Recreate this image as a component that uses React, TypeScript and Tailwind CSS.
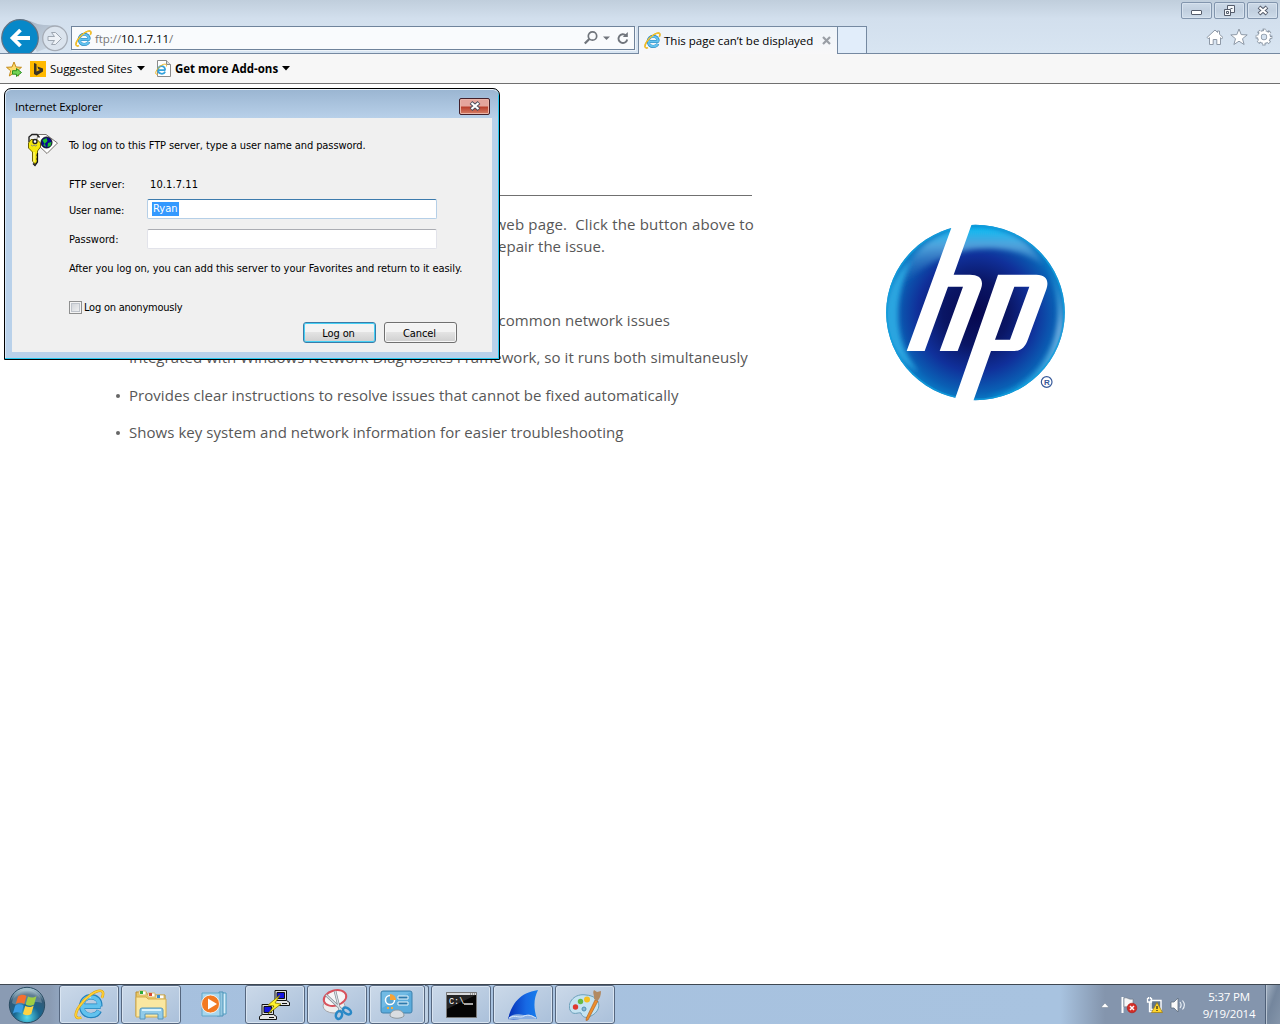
import React from 'react';

function IeIcon({ size }: { size: number }) {
  return (
    <svg width={size} height={size} viewBox="0 0 32 32" fill="none" className="shrink-0">
      <path d="M27.5 17.8H10.2M26.6 17.8C27 11.5 23 8 17.5 8S8 12 8 17.6c0 5.900 4 9.900 9.600 9.900 4 0 7-1.900 8.500-5" stroke="#2383bd" strokeWidth="5.600" />
      <path d="M27 17.8H10.2M26.200 17.8C26.500 11.500 22.600 8.400 17.500 8.400S8.300 12.300 8.300 17.600c0 5.600 3.900 9.400 9.300 9.400 4 0 6.600-1.700 8-4.500" stroke="#62c2ee" strokeWidth="4" />
      <path d="M8.500 13.500c2-3.500 5-5.300 9-5.300" stroke="#b5e8fb" strokeWidth="1.500" />
      <path d="M7.500 29.300C4.700 30.500 2.500 30 2 28 .8 22.500 9 11.500 17.500 5.700 22.500 2.300 28 .5 29.600 3c.8 1.500.4 3.800-.8 6.200" stroke="#dd9d00" strokeWidth="2.700" />
      <path d="M7.500 29.300C4.700 30.500 2.500 30 2 28 .8 22.500 9 11.500 17.500 5.700 22.500 2.300 28 .5 29.600 3c.8 1.500.4 3.800-.8 6.200" stroke="#fdd13a" strokeWidth="1.700" />
    </svg>
  );
}

function NavButtons() {
  return (
    <svg width="71" height="53" viewBox="0 0 71 53" className="shrink-0">
      <defs>
        <linearGradient id="navShade" x1="0" y1="0" x2="1" y2="1">
          <stop offset="0" stopColor="#8796a8" />
          <stop offset="1" stopColor="#d3deea" />
        </linearGradient>
      </defs>
      <path d="M21 19.500c10 0 13 5 23 5.500 8 .3 14 0 19 4L52 46l-15 6z" fill="url(#navShade)" opacity=".65" />
      <circle cx="55" cy="38.300" r="12.300" fill="#dbe4ee" stroke="#a5acb6" strokeWidth="1.300" />
      <path d="M48 36.500h6.500l-3-4h4l6 6-6 6h-4l3-4H48z" fill="#eef2f7" stroke="#9da6b1" />
      <circle cx="20" cy="38" r="18.300" fill="#0788c8" stroke="#647282" strokeWidth="1.200" />
      <path d="M30 38H13M20.500 30l-8 8 8 8" fill="none" stroke="#fff" strokeWidth="3.800" />
    </svg>
  );
}

function WindowButtons() {
  return (
    <div className="flex gap-[2px] pt-[2px] pr-[2px]">
      {[0, 1, 2].map((i) => (
        <div key={i} className="flex h-[17px] w-[31px] items-center justify-center rounded-[2px] border border-[#8295ad] bg-gradient-to-b from-[#ccd9e7] via-[#c1cfdf] to-[#cddbe9] shadow-[inset_0_0_0_1px_#d7e2ee]">
          {i === 0 && <div className="mt-[4px] h-[5px] w-[11px] rounded-[1px] border border-[#555c6b] bg-white" />}
          {i === 1 && (
            <svg width="13" height="12" fill="#f4f7fa" stroke="#555c6b">
              <path d="M4.500.5h7v7h-7zM7.500 3.500h2" />
              <path d="M1.500 4.500h6v6h-6zM3.500 6.500h2v2h-2z" />
            </svg>
          )}
          {i === 2 && (
            <svg width="12" height="11">
              <path d="M2 2l8 7M10 2L2 9" stroke="#555c6b" strokeWidth="4" />
              <path d="M2.500 2.500l7 6M9.500 2.500l-7 6" stroke="#fff" strokeWidth="2" />
            </svg>
          )}
        </div>
      ))}
    </div>
  );
}

function GearIcon() {
  return (
    <svg width="18" height="18" viewBox="0 0 18 18" fill="none">
      <circle cx="9" cy="9" r="6.700" stroke="#8d99a7" strokeWidth="3.400" strokeDasharray="3.100 2.162" strokeDashoffset="1.500" />
      <circle cx="9" cy="9" r="4.700" stroke="#8d99a7" strokeWidth="4.600" />
      <circle cx="9" cy="9" r="6.300" stroke="#fff" strokeWidth="2.600" strokeDasharray="1.800 3.148" strokeDashoffset=".85" />
      <circle cx="9" cy="9" r="4.600" stroke="#fff" strokeWidth="2.900" />
    </svg>
  );
}

function Header() {
  return (
    <header className="flex h-[54px] items-start border-b border-[#7589a1] bg-gradient-to-b from-[#c0cedc] via-[#d2dfed] via-35% to-[#d8e5f2] text-[11.5px]">
      <NavButtons />
      <div className="mt-[26px] flex h-[24px] w-[564px] shrink-0 items-center border border-[#6f839b] bg-[#f9fbfd] pr-[3px] pl-[3px] shadow-[1px_1px_0_#eef4fa]">
        <IeIcon size={17} />
        <span className="mt-px ml-[3px] grow tracking-[-0.06px] text-[#777]">ftp://<span className="text-black">10.1.7.11</span>/</span>
        <svg width="48" height="18" fill="none" stroke="#70757c">
          <circle cx="9.500" cy="7" r="4.200" strokeWidth="1.700" />
          <path d="M6.300 10L1.800 14.500" strokeWidth="2.300" />
          <path d="M20 7.500h7L23.500 11z" fill="#70757c" stroke="none" />
          <path d="M43 6.500A4.400 4.400 0 1 0 44.200 10.500" strokeWidth="1.900" />
          <path d="M44.800 3v5h-5z" fill="#70757c" stroke="none" />
        </svg>
      </div>
      <div className="mt-[26px] ml-[3px] flex h-[28px] w-[200px] shrink-0 items-center border-x border-t border-[#7589a1] bg-gradient-to-b from-[#edf3f9] to-[#f8f8f9] pl-[5px]">
        <IeIcon size={17} />
        <span className="ml-[3px] w-[149px] whitespace-nowrap text-black">This page can’t be displayed</span>
        <svg width="9" height="9" className="ml-[9px]"><path d="M1 1l7 7M8 1L1 8" stroke="#999ea5" strokeWidth="2.200" /></svg>
      </div>
      <div className="mt-[26px] h-[27px] w-[29px] shrink-0 border-t border-r border-[#7589a1] bg-[#e1edfa]" />
      <div className="flex grow flex-col items-end">
        <WindowButtons />
        <div className="mt-[9px] mr-[7px] flex items-center gap-[7px]">
          <svg width="18" height="18" fill="#fff" stroke="#8e99a7" className="-mr-px"><path d="M1 9.500L9 2l2.500 2.400V3h2v3.300L17 9.500l-1.200 1.200-1.300-1v6.800h-3.700v-5H7.200v5H3.500V9.700l-1.300 1z" /></svg>
          <svg width="18" height="18" fill="#fff" stroke="#8e99a7"><path d="M9 1l2.200 5.600 6 .3-4.700 3.800 1.600 5.800L9 13.200l-5.100 3.300 1.600-5.800L.8 6.900l6-.3z" /></svg>
          <GearIcon />
        </div>
      </div>
    </header>
  );
}

function FavoritesBar() {
  return (
    <nav className="flex h-[30px] items-center border-b border-[#707070] bg-[#f7f7f7] pl-[6px] text-[11.5px] text-black">
      <svg width="17" height="17" className="mt-px shrink-0">
        <path d="M8 1l2 5 5.500.3-4.200 3.500 1.400 5.200L8 12l-4.700 3 1.400-5.200L.5 6.300 6 6z" fill="#fedc6a" stroke="#c48b1d" />
        <path d="M6.500 9.700h4V7.500l5 4-5 4v-2.300h-4z" fill="#73d455" stroke="#2b8f23" />
      </svg>
      <svg width="16" height="16" className="ml-[7px] shrink-0"><path d="M0 0h16v16H0z" fill="#ffb900" /><path d="M4 2l2.500 1v7.500L10 9 8.300 8 7.400 5.500 13 7.600v3L6.500 14.500 4 13z" fill="#3b3526" /></svg>
      <span className="ml-[4px] w-[83px] whitespace-nowrap tracking-[-0.1px]">Suggested Sites</span>
      <svg width="8" height="5" className="ml-[4px]"><path d="M0 0h8L4 4.500z" /></svg>
      <div className="ml-[10px] h-[17px] w-[17px] shrink-0">
        <svg width="17" height="17"><path d="M2.500.5h9l4 4v12h-13z" fill="#fff" stroke="#8b8b8b" /><path d="M11.500.5v4h4" fill="#ddd" stroke="#8b8b8b" /><g transform="translate(0 3) scale(.39)" fill="none"><path d="M27 18H10M26 18c0-14-18-13-18 0 0 12 15 12 18 4" stroke="#35a2dc" strokeWidth="4.500" /><path d="M7 29c-15 2 5-26 18-26 5 0 5 3 4 6" stroke="#f1b51c" strokeWidth="2.500" /></g></svg>
      </div>
      <span className="ml-[3px] w-[105px] whitespace-nowrap font-bold">Get more Add-ons</span>
      <svg width="8" height="5" className="ml-[2px]"><path d="M0 0h8L4 4.500z" /></svg>
    </nav>
  );
}

function KeyIcon() {
  return (
    <svg width="32" height="34" viewBox="0 0 32 34">
      <path d="M11 1.500h8L30.500 10 20 20.500 9 10z" fill="#fff" stroke="#77736e" />
      <circle cx="19.500" cy="9.500" r="5.500" fill="#080890" stroke="#111" />
      <path d="M15.500 7l4-2 1 3-3 3zM21 10l3.500-1-1 4-3 1zM16 12l2-1 1 3z" fill="#20c128" />
      <path d="M2 9V4l3-2.500h5l2.500 3" fill="none" stroke="#222" strokeWidth="1.400" />
      <path d="M4 6.500h6L13.500 10v4l-3 4v3l-1 1 1 2-1 2 1 2-2.500 3-2.500-3V19L1.500 15v-5z" fill="#f5e90b" stroke="#6b6200" />
      <path d="M10.500 20v9l-2.500 3.500-2-2" fill="none" stroke="#111" strokeWidth="1.200" />
      <circle cx="8" cy="8.500" r="2" fill="#fff" stroke="#222" strokeWidth="1.400" />
      <path d="M7 19v10" stroke="#fffbb0" />
      <path d="M4 12l1.500 1L7 12l1.500 1 1.500-1" fill="none" stroke="#888" />
    </svg>
  );
}

function DialogButton({ label, primary }: { label: string; primary?: boolean }) {
  return (
    <button className={'h-[21px] w-[73px] rounded-[3px] border bg-gradient-to-b from-[#f3f3f3] from-45% via-[#e3e3e3] via-50% to-[#cfcfcf] ' + (primary ? 'border-[#3a7ca8] shadow-[inset_0_0_0_1px_#45d0f5]' : 'border-[#707070] shadow-[inset_0_0_0_1px_#f7f7f7]')}>
      <span className="block pt-px pr-[2px] leading-[17px] tracking-[-0.1px]">{label}</span>
    </button>
  );
}

function LogonDialog() {
  return (
    <section className="absolute top-[88px] left-[4px] flex h-[272px] w-[496px] flex-col rounded-t-[7px] border border-black bg-[#b9d1ea] bg-gradient-to-b from-[#9ab5d1] to-[#b9d1ea] to-[30px] px-[7px] pb-[7px] shadow-[inset_0_1px_0_#eaf3fb,inset_-1px_-1px_0_#25c8ef,inset_1px_0_0_#d7e8f8] font-['DejaVu_Sans_Condensed','DejaVu_Sans',sans-serif] text-[11px] leading-[14px] text-black">
      <div className="flex h-[29px] shrink-0 items-center justify-between pt-[5px] pr-[2px] pl-[3px]">
        <h1 className="pt-px font-['Open_Sans',sans-serif] text-[11.5px] tracking-[-0.22px]">Internet Explorer</h1>
        <div className="flex h-[17px] w-[31px] items-center justify-center rounded-[2px] border border-[#43202a] bg-gradient-to-b from-[#e5a59c] from-48% via-[#b83a28] via-52% to-[#d58069] shadow-[inset_0_0_0_1px_#eab5a9]">
          <svg width="12" height="10"><path d="M2 1.500l8 7M10 1.500l-8 7" stroke="#4b4c5a" strokeWidth="4" /><path d="M2.500 2l7 6M9.500 2l-7 6" stroke="#fff" strokeWidth="2.200" /></svg>
        </div>
      </div>
      <div className="flex grow bg-[#f0f0f0] pt-[15px] pl-[15px]">
        <div className="w-[42px] shrink-0"><KeyIcon /></div>
        <div className="w-[394px] shrink-0 pt-[6px]">
          <p className="whitespace-nowrap tracking-[-0.09px]">To log on to this FTP server, type a user name and password.</p>
          <div className="mt-[25px] grid grid-cols-[78px_290px] items-center">
            <span className="tracking-[0.07px]">FTP server:</span><span className="pl-[3px] tracking-[0.1px]">10.1.7.11</span>
            <span className="mt-[9px] tracking-[-0.2px]">User name:</span>
            <div className="mt-[7px] mb-px flex h-[20px] items-center rounded-[2px] border border-[#b5cfe7] border-t-[#3d7bad] bg-white pl-[4px]"><span className="h-[14px] w-[27px] bg-[#3399ff] pl-px text-white">Ryan</span></div>
            <span className="mt-[10px]">Password:</span>
            <div className="mt-[9px] mb-px h-[20px] rounded-[2px] border border-[#e2e3ea] border-t-[#abadb3] bg-white" />
          </div>
          <p className="mt-[12px] whitespace-nowrap tracking-[-0.07px]">After you log on, you can add this server to your Favorites and return to it easily.</p>
          <label className="mt-[24px] flex items-center">
            <span className="-mt-px h-[13px] w-[13px] border border-[#8e8f8f] bg-gradient-to-br from-[#cbcfd5] to-[#f6f6f6] shadow-[inset_0_0_0_1px_#f4f4f4,inset_0_0_0_2px_#bfc4cb]" />
            <span className="ml-[2px] pt-px tracking-[-0.23px]">Log on anonymously</span>
          </label>
          <div className="mt-[7px] flex gap-[8px] pl-[234px]"><DialogButton label="Log on" primary /><DialogButton label="Cancel" /></div>
        </div>
      </div>
    </section>
  );
}

function HpLogo() {
  return (
    <svg width="210" height="205" viewBox="0 0 630 615">
      <defs>
        <radialGradient id="hpFill" cx="0.5" cy="0.5" r="0.52">
          <stop offset="0" stopColor="#06074f" /><stop offset=".35" stopColor="#0a1665" /><stop offset=".62" stopColor="#10309a" /><stop offset=".84" stopColor="#0a5fb4" /><stop offset="1" stopColor="#0a8ed2" />
        </radialGradient>
        <linearGradient id="hpTop" x1="0" y1="0" x2="0" y2="1"><stop offset="0" stopColor="#00bdf5" /><stop offset=".3" stopColor="#64b4e6" stopOpacity=".8" /><stop offset="1" stopColor="#164ba9" stopOpacity="0" /></linearGradient>
        <linearGradient id="hpRight" x1="0" y1="0" x2="0" y2="1"><stop offset="0" stopColor="#15a3e3" /><stop offset=".5" stopColor="#a1c7ec" /><stop offset="1" stopColor="#079cdb" /></linearGradient>
        <filter id="hpSoft"><feGaussianBlur stdDeviation="8" /></filter>
        <clipPath id="hpClip"><ellipse cx="316.500" cy="307.500" rx="268" ry="263" /></clipPath>
      </defs>
      <g clipPath="url(#hpClip)">
        <path d="M45 40h545v540H45z" fill="url(#hpFill)" />
        <path d="M85 240C125 20 430-15 520 165c-80-65-290-90-435 75z" fill="url(#hpTop)" filter="url(#hpSoft)" />
        <path d="M520 145c45 70 60 170 28 255-35 90-98 143-195 160 190 30 300-215 167-415z" fill="url(#hpRight)" opacity=".75" filter="url(#hpSoft)" />
        <path d="M125 150C70 265 65 390 145 485 10 420 20 230 125 150z" fill="#2ba5e0" filter="url(#hpSoft)" />
        <ellipse cx="316.500" cy="307.500" rx="266" ry="261" fill="none" stroke="#119fdc" strokeWidth="6" opacity=".75" />
      </g>
      <path d="M249 40L110 423h54l70-193h45l-70 193h54l70-187c10-29-6-42-33-42h-49L306 40z" fill="#fff" />
      <path fillRule="evenodd" d="M384 194h115c32 0 39 20 29 47l-54 147c-8 23-20 35-41 35h-70l-55 155h-57zM433 230l-58 159h45l58-159z" fill="#fff" />
      <circle cx="530" cy="516" r="16" fill="none" stroke="#37599a" strokeWidth="3.500" />
      <text x="522" y="525" fontFamily="Liberation Sans, sans-serif" fontSize="24" fontWeight="700" fill="#37599a">R</text>
    </svg>
  );
}

function PageBody() {
  return (
    <main className="flex h-[900px] bg-white text-[15px] leading-[22px] text-[#575757]">
      <article className="w-[755px] shrink-0 pt-[111px] pl-[116px]">
        <div className="mr-[3px] h-px bg-[#707070]" />
        <p className="mt-[17px] mr-px text-right whitespace-pre tracking-[0.16px]">web page.  Click the button above to</p>
        <p className="w-[489px] text-right tracking-[0.05px]">repair the issue.</p>
        <ul className="mt-[52px] grid grid-rows-4 gap-y-[15.400px] tracking-[0.05px]">
          <li className="w-[554px] text-right">common network issues</li>
          {['Integrated with Windows Network Diagnostics Framework, so it runs both simultaneusly', 'Provides clear instructions to resolve issues that cannot be fixed automatically', 'Shows key system and network information for easier troubleshooting'].map((t) => (
            <li key={t} className="flex items-center whitespace-nowrap"><span className="mt-[2px] mr-[9px] h-[4px] w-[4px] rounded-full bg-[#666]" /><span>{t}</span></li>
          ))}
        </ul>
      </article>
      <div className="mt-[126px] ml-[115px]"><HpLogo /></div>
    </main>
  );
}

function TaskButton({ children, plain, className = '' }: { children: React.ReactNode; plain?: boolean; className?: string }) {
  return (
    <div className={'flex h-[39px] w-[60px] shrink-0 items-center justify-center rounded-[3px] border ' + (plain ? 'border-transparent ' : 'border-[#56677f] bg-gradient-to-br from-[#cbd9e9] to-[#aac0da] shadow-[inset_0_0_0_1px_#d8e4f1] ') + className}>
      {children}
    </div>
  );
}

function StartOrb() {
  return (
    <svg width="38" height="38" viewBox="0 0 38 38">
      <defs><radialGradient id="orb" cx=".5" cy=".85" r=".8"><stop offset="0" stopColor="#56dcef" /><stop offset=".45" stopColor="#19668f" /><stop offset=".8" stopColor="#345975" /><stop offset="1" stopColor="#a1bfcd" /></radialGradient></defs>
      <circle cx="19" cy="19" r="17.700" fill="url(#orb)" stroke="#294b62" />
      <path d="M4 17C6-1 32-1 34 17 23 13 14 23 4 17z" fill="#fff" opacity=".22" />
      <path d="M10 10.500c3-2.500 6-2 8.500-.5l-2.300 8c-2.500-1.500-5.500-2-8.500 0z" fill="#f36f30" />
      <path d="M20 10.500c3 1.500 5.500 1.500 8.500-.5l-2.400 8.500c-3 2-5.700 1.500-8.400 0z" fill="#9fce45" />
      <path d="M7.200 19.500c3-2 6-1.500 8.500 0l-2.300 8c-2.500-1.500-5.500-2-8.500 0z" fill="#3b9de4" />
      <path d="M17.200 20c3 1.500 5.500 1.500 8.500-.5l-2.400 8.500c-3 2-5.700 1.500-8.400 0z" fill="#fed344" />
    </svg>
  );
}

function ExplorerIcon() {
  return (
    <svg width="34" height="32" viewBox="0 0 34 32">
      <path d="M2 3h10l2 3h17v21H2z" fill="#e9c765" stroke="#b98e30" />
      <path d="M5 2h7v4H5zM14 4h7v4h-7zM22 6h8v4h-8z" fill="#fff" stroke="#d7bd75" /><path d="M6 2h3v3H6z" fill="#2cab38" /><path d="M15 4h3v3h-3z" fill="#d94830" /><path d="M23 6h3v3h-3z" fill="#368cce" />
      <path d="M2 8h10l2 2h18v18H2z" fill="#fae7a1" stroke="#d3ac4e" />
      <path d="M6 30V21q0-2 2-2h19q2 0 2 2v9h-5v-5H11v5z" fill="#91cbe9" stroke="#5797bd" /><path d="M8 20h19v2H8z" fill="#d9f2fc" />
    </svg>
  );
}

function MediaIcon() {
  return (
    <svg width="30" height="28" viewBox="0 0 30 28" className="ml-[3px]"><path d="M21 2h5v21h-9z" fill="#d7effa" stroke="#4f9dc2" /><path d="M19 1h4v24h-6z" fill="#96c8e1" stroke="#4c92b7" /><path d="M2 2h18v23H2z" fill="#a7d6ed" stroke="#63a6c7" /><circle cx="10.500" cy="13" r="9" fill="#f27922" stroke="#fff" strokeWidth=".8" /><path d="M8 7.500l9 5.500-9 5.500z" fill="#fff" /></svg>
  );
}

function PuttyIcon() {
  const pc = (x: number, y: number) => (
    <g transform={`translate(${x} ${y})`} stroke="#111"><path d="M3 .5h11.500v10H3z" fill="#ddd" /><path d="M5 2.500h7.500v6H5z" fill="#1414df" /><path d="M.5 12.500l3-2h11l3 2v3H.500z" fill="#e4e4e4" /><path d="M10 13.500h5" /></g>
  );
  return <svg width="32" height="32" viewBox="0 0 32 32">{pc(13, 1)}{pc(0, 15)}<path d="M21 6l-12 10 6 1-6 8 13-10-6-1z" fill="#fff22d" stroke="#817a00" strokeWidth=".8" /></svg>;
}

function SnipIcon() {
  return (
    <svg width="32" height="33" viewBox="0 0 32 33" fill="none"><ellipse cx="13" cy="18" rx="11" ry="7" fill="#eee" stroke="#a5a5aa" /><ellipse cx="14" cy="10" rx="11.500" ry="7.500" transform="rotate(-16 14 10)" fill="#f6f6f7" stroke="#d8525c" strokeWidth="2" /><path d="M5 7l16 15M14 3l5 20" stroke="#7e8991" strokeWidth="2.600" /><path d="M5 7l16 15M14 3l5 20" stroke="#dbe2e6" strokeWidth="1.200" /><ellipse cx="18" cy="27" rx="3" ry="4" transform="rotate(20 18 27)" stroke="#2988c6" strokeWidth="2.500" /><ellipse cx="26" cy="23" rx="4.500" ry="2.700" transform="rotate(35 26 23)" stroke="#2988c6" strokeWidth="2.500" /></svg>
  );
}

function ControlIcon() {
  return (
    <svg width="34" height="29" viewBox="0 0 34 29"><rect x="1" y="1" width="31" height="22" rx="2" fill="#5bacdc" stroke="#3f81ad" /><path d="M2 2h29L2 18z" fill="#9bd5f4" opacity=".35" /><circle cx="10" cy="10" r="4.500" fill="#5ca6d2" stroke="#fff" strokeWidth="1.500" /><path d="M10 10V4a6 6 0 0 1 6 6z" fill="#f6a336" /><path d="M18 6h10v3H18zM18 12h10v3H18z" fill="#2b79ad" stroke="#e9f6fc" /><path d="M7 18h2M11 18h2" stroke="#faaa34" strokeWidth="2" /><path d="M10 26c0-8 14-8 14 0-3 3-11 3-14 0z" fill="#d9dde1" stroke="#8f999f" /></svg>
  );
}

function ConsoleIcon() {
  return (
    <svg width="31" height="26" viewBox="0 0 31 26"><path d="M.5.5h30v25H.5z" fill="#050505" stroke="#777" /><path d="M1 1h29v2H1z" fill="#d8dadd" /><path d="M24 2h1M26 2h1M28 2h1" stroke="#555" /><path d="M1 3h29L1 17z" fill="#fff" opacity=".13" /><text x="3" y="12" fontFamily="Liberation Mono, monospace" fontSize="8.500" fill="#fff">C:\</text><path d="M18 12h9" stroke="#fff" strokeWidth="1.300" /></svg>
  );
}

function SharkIcon() {
  return (
    <svg width="32" height="32" viewBox="0 0 32 32"><defs><linearGradient id="fin"><stop stopColor="#052fb6" /><stop offset=".6" stopColor="#1769e4" /><stop offset="1" stopColor="#167eec" /></linearGradient></defs><path d="M1 30C5 15 12 4 31 1c-4 8-5 17-1 29-10-3-18 2-29 0z" fill="url(#fin)" /><path d="M1 30c5-7 12-4 16-4s8-2 13 4z" fill="#8bafe2" /><path d="M2 29c6-4 11 1 15-2 5-2 8 0 12 2" fill="none" stroke="#dae8fa" /></svg>
  );
}

function PaintIcon() {
  return (
    <svg width="32" height="32" viewBox="0 0 32 32"><path d="M17 6C6 4-2 13 1 21c3 6 8 2 11 3 1 4 5 6 10 3 12-6 10-20-5-21z" fill="#c4e3f2" stroke="#6b9fb9" /><circle cx="6.500" cy="18" r="2.700" fill="#df3931" /><circle cx="11.500" cy="12.500" r="2.700" fill="#64b948" /><circle cx="18" cy="10.500" r="3" fill="#f5bf21" /><circle cx="15" cy="20" r="2" fill="#89b9d2" stroke="#5190b2" /><path d="M26 11l3 1-10 19-2 .5.300-2.500z" fill="#ed8e2d" stroke="#a75d1b" strokeWidth=".6" /><path d="M25 10c1-3-2-6 0-9l3 2 4-1c0 4-1 8-4 10z" fill="#b28a63" /></svg>
  );
}

function TrayIcons() {
  return (
    <div className="flex shrink-0 items-center">
      <svg width="8" height="5" className="mt-px"><path d="M0 4.500L4 0l4 4.500z" fill="#fff" stroke="#5e6d7e" strokeWidth=".4" /></svg>
      <svg width="17" height="18" className="mt-px ml-[12px]"><path d="M1.500 1v16" stroke="#fff" strokeWidth="2" /><path d="M3 2c4-1 4 2 9 1v8c-4 1-5-1-9 0z" fill="#f7f7f7" stroke="#6a7481" strokeWidth=".6" /><circle cx="11" cy="12" r="4.800" fill="#d52e27" stroke="#aa1d1a" strokeWidth=".6" /><path d="M9 10l4 4M13 10l-4 4" stroke="#fff" strokeWidth="1.500" /></svg>
      <svg width="17" height="18" className="mt-px ml-[8px]"><path d="M5 4.500h10v9H5z" fill="#61758c" stroke="#fff" strokeWidth="1.400" /><path d="M1.500 2v4h4V2M3.500 6v9.500H8M2.500 1v2M4.500 1v2" fill="none" stroke="#fff" strokeWidth="1.300" /><path d="M11 6.500l5.500 10H5.500z" fill="#ffd52b" stroke="#a17a0b" strokeWidth=".7" /><path d="M11 10v3M11 14v1" stroke="#222" strokeWidth="1.200" /></svg>
      <svg width="18" height="16" className="ml-[7px]"><path d="M1 5h3l4-4v14l-4-4H1z" fill="#f9f9f9" stroke="#5e6d7e" strokeWidth=".8" /><path d="M10 5c1.500 2 1.500 4 0 6M12.500 3.500c2.500 3 2.500 6 0 9" fill="none" stroke="#edf3f9" strokeWidth="1.100" /></svg>
    </div>
  );
}

function Taskbar() {
  return (
    <footer className="flex h-[40px] items-start border-t border-[#3f4852] bg-[linear-gradient(90deg,#8a9bb3_0,#8a9bb3_50px,#a6c0de_85px,#a8c3e0_1060px,#8495ad_1105px,#8495ad_100%)]">
      <div className="flex h-[39px] w-[59px] shrink-0 items-center pl-[8px]"><StartOrb /></div>
      <div className="flex gap-[2px]">
        <TaskButton><IeIcon size={31} /></TaskButton>
        <TaskButton><ExplorerIcon /></TaskButton>
        <TaskButton plain><MediaIcon /></TaskButton>
        <TaskButton><PuttyIcon /></TaskButton>
        <TaskButton><SnipIcon /></TaskButton>
        <div className="flex w-[60px]"><TaskButton className="w-[56px]!"><ControlIcon /></TaskButton><div className="h-[39px] w-[4px] rounded-r-[3px] border-y border-r border-[#56677f] bg-[#bdd0e4]" /></div>
        <TaskButton><ConsoleIcon /></TaskButton>
        <TaskButton><SharkIcon /></TaskButton>
        <TaskButton><PaintIcon /></TaskButton>
      </div>
      <div className="ml-auto flex h-[39px] shrink-0 items-center">
        <TrayIcons />
        <div className="ml-[11px] w-[60px] text-center text-[11.5px] leading-[17px] tracking-[-0.2px] text-white"><div>5:37 PM</div><div>9/19/2014</div></div>
        <div className="ml-[6px] h-[39px] w-[15px] border-l border-[#4e5f77] bg-gradient-to-br from-[#a4b2c2] via-[#74869d] via-45% to-[#8495aa] shadow-[inset_1px_0_0_#b8c4d2]" />
      </div>
    </footer>
  );
}

export default function App() {
  return (
    <div className="relative h-[1024px] w-[1280px] overflow-hidden bg-white font-['Open_Sans','Noto_Sans',sans-serif]">
      <Header />
      <FavoritesBar />
      <PageBody />
      <Taskbar />
      <LogonDialog />
    </div>
  );
}
